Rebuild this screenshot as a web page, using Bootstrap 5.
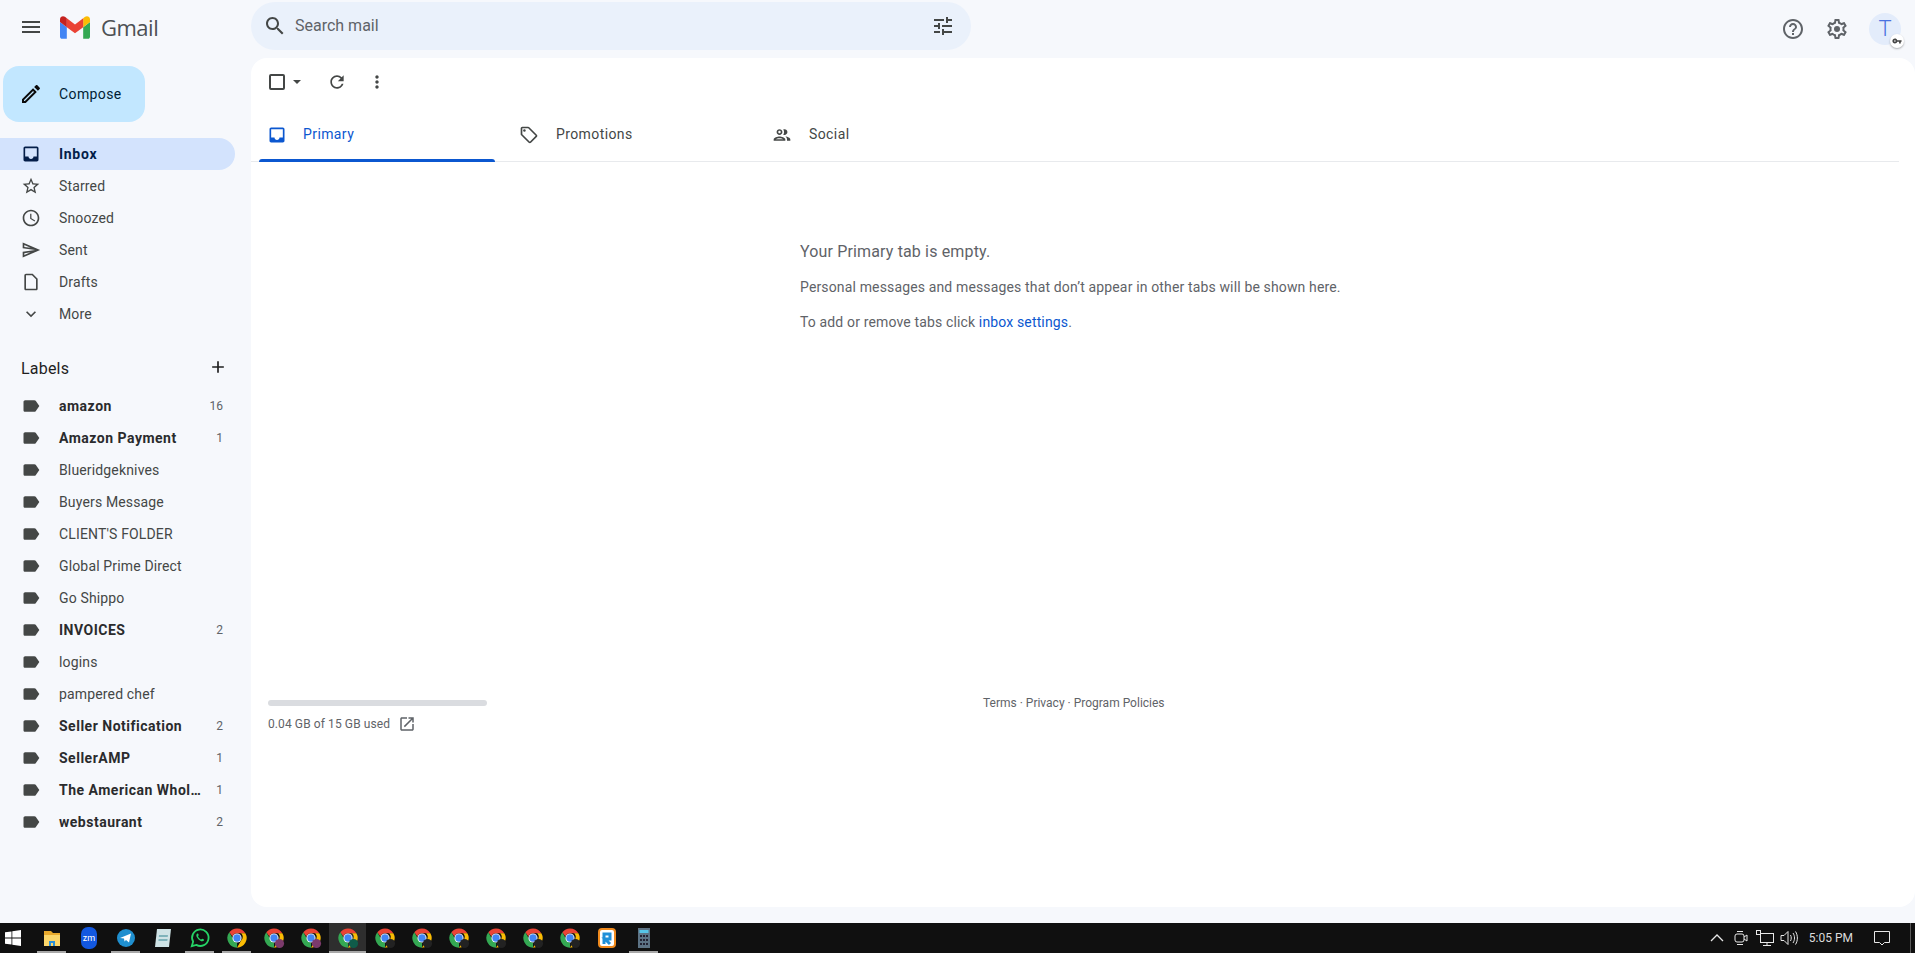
<!DOCTYPE html>
<html lang="en">
<head>
  <meta charset="UTF-8">
  <title>Inbox - Gmail</title>
  <meta name="viewport" content="width=device-width, initial-scale=1">
  <link href="https://cdn.jsdelivr.net/npm/bootstrap@5.3.0/dist/css/bootstrap.min.css" rel="stylesheet">
  <style>
    body { background: #f6f8fc; font-family: Roboto, "Liberation Sans", sans-serif; font-size: 14px; color: #444746; height: 953px; overflow: hidden; }
    svg { display: block; flex: none; fill: currentColor; }

    /* top bar */
    .gm-top { height: 58px; padding-top: 2px; }
    .gm-brand { width: 251px; padding: 0 0 6px 19px; color: #444746; }
    .gm-brand-logo { margin-left: 17px; }
    .gm-brand-name { font-family: "Open Sans", sans-serif; font-size: 22px; color: #4d5054; margin-left: 11px; letter-spacing: -.5px; }
    .gm-search { width: 720px; height: 48px; border-radius: 24px; background: #eaf1fb; padding: 0 16px 0 12px; }
    .gm-search-text { font-size: 16px; color: #5f6368; margin-left: 8px; }
    .gm-top-right { padding-right: 14px; color: #5f6368; gap: 20px; margin-top: -2px; }
    .gm-avatar { width: 32px; height: 32px; border-radius: 50%; background: #e3ecfb; color: #4a72e0; font-size: 22px; font-weight: 300; line-height: 32px; text-align: center; position: relative; }
    .gm-key { position: absolute; right: -3px; bottom: -3px; width: 14px; height: 14px; border-radius: 50%; background: #fff; color: #444; box-shadow: 0 1px 2px rgba(0,0,0,.3); padding: 2px; }

    /* sidebar */
    .gm-side { width: 251px; flex: none; }
    .gm-compose { width: 142px; height: 56px; margin: 8px 0 16px 3px; border-radius: 16px; background: #c2e7ff; color: #001d35; letter-spacing: .4px; padding-left: 16px; gap: 16px; }
    .gm-compose svg { color: #0b0b0b; }
    .gm-row { width: 235px; height: 32px; padding: 0 12px 0 21px; border-radius: 0 16px 16px 0; }
    .gm-row-text { margin-left: 18px; flex: 1 1 0; min-width: 0; white-space: nowrap; letter-spacing: .15px; }
    .gm-row-on { background: #d3e3fd; color: #041e49; font-weight: 700; }
    .gm-row-on .gm-row-text { letter-spacing: .7px; }
    .gm-row-bold .gm-row-text { letter-spacing: .5px; }
    .gm-row-bold { color: #2a2b2d; font-weight: 700; }
    .gm-row-bold svg { color: #444746; }
    .gm-count { font-size: 12px; color: #5f6368; font-weight: 400; margin-left: 8px; }
    .gm-labels-head { width: 235px; height: 60px; padding: 27px 7px 0 21px; font-size: 16px; color: #1f1f1f; letter-spacing: .2px; }

    /* main card */
    .gm-card { background: #fff; border-radius: 16px; height: 849px; }
    .gm-tools { height: 48px; padding-left: 17px; color: #444746; }
    .gm-check { width: 16px; height: 16px; border: 2px solid #444746; border-radius: 2px; margin-left: 1px; }
    .gm-caret { width: 0; height: 0; border-left: 4px solid transparent; border-right: 4px solid transparent; border-top: 4px solid #444746; margin: 0 26px 0 8px; }
    .gm-tools-dots { margin-left: 20px; }
    .gm-tabs { height: 56px; border-bottom: 1px solid #e8eaed; margin-right: 16px; }
    .gm-tab { width: 253px; padding: 2px 0 0 24px; gap: 17px; color: #444746; letter-spacing: .4px; position: relative; }
    .gm-tab:first-child { margin-left: 8px; width: 236px; padding-left: 8px; gap: 16px; color: #0b57d0; }
    .gm-tab-bar { position: absolute; left: 0; right: 0; bottom: -1px; height: 3px; background: #0b57d0; border-radius: 3px 3px 0 0; }
    .gm-empty { padding: 79px 0 0 549px; color: #5f6368; height: 538px; }
    .gm-empty-title { font-size: 16px; line-height: 22px; margin-bottom: 14px; letter-spacing: .15px; }
    .gm-empty-line { line-height: 20px; margin-bottom: 15px; letter-spacing: .145px; }
    .gm-link { color: #0b57d0; text-decoration: none; }
    .gm-foot { font-size: 12px; color: #5f6368; padding-left: 17px; }
    .gm-bar { width: 219px; height: 6px; border-radius: 3px; background: #dadce0; margin-bottom: 9px; }
    .gm-used { letter-spacing: .1px; }
    .gm-foot-links { margin-left: 496px; margin-top: -6px; }

    /* windows taskbar */
    .gm-task { height: 30px; background: #101010; color: #e8e8e8; margin-top: 16px; }
    .gm-win { width: 33px; padding-left: 5px; color: #fff; }
    .gm-slot { width: 37px; height: 30px; position: relative; }
    .gm-slot-on { background: #2e2e2e; }
    .gm-slot-run::after { content: ""; position: absolute; left: 4px; right: 4px; bottom: 0; height: 2px; background: #a8a8a8; }
    .gm-slot-on::after { left: 0; right: 0; }
    .gm-tray { font-size: 12px; height: 30px; }
    .gm-tray svg { fill: none; stroke: #e8e8e8; }
    .gm-tray-cam { margin-left: 10px; }
    .gm-tray-net { margin-left: 8px; }
    .gm-tray-vol { margin-left: 6px; }
    .gm-clock { margin: 0 21px 0 11px; color: #dcdcdc; }
    .gm-tray-sep { width: 1px; height: 30px; background: #5a5a5a; margin: 0 4px 0 20px; }
  </style>
</head>
<body>

  <svg width="0" height="0" class="position-absolute">
    <defs>
      <symbol id="chrome" viewBox="0 0 24 24">
        <path fill="#ea4335" d="M12 1.5a10.5 10.5 0 0 1 9.1 5.25H12a5.25 5.25 0 0 0-5 3.6L3.6 5.7A10.5 10.5 0 0 1 12 1.5z"/>
        <path fill="#fbbc04" d="M21.1 6.75A10.5 10.5 0 0 1 12 22.5l4.5-7.8a5.25 5.25 0 0 0 0-7.95z"/>
        <path fill="#34a853" d="M3.6 5.7l4.5 7.8a5.25 5.25 0 0 0 4 3.7L12 22.5A10.5 10.5 0 0 1 3.6 5.7z"/>
        <circle cx="12" cy="12" r="5" fill="#fff"/>
        <circle cx="12" cy="12" r="4" fill="#4285f4"/>
      </symbol>
      <symbol id="label" viewBox="0 0 24 24"><path d="M17.63 5.84C17.27 5.33 16.67 5 16 5L5 5.01C3.9 5.01 3 5.9 3 7v10c0 1.1.9 1.99 2 1.99L16 19c.67 0 1.27-.33 1.63-.84L22 12l-4.37-6.16z"/></symbol>
    </defs>
  </svg>

  <!-- Top bar -->
  <header class="gm-top d-flex">
    <div class="gm-brand d-flex align-items-center">
      <svg width="24" height="24" viewBox="0 0 24 24"><path d="M3 18h18v-2H3v2zm0-5h18v-2H3v2zm0-7v2h18V6H3z"/></svg>
      <svg class="gm-brand-logo" width="30" height="23" viewBox="52 42 88 66">
        <path fill="#4285f4" d="M58 108h14V74L52 59v43c0 3.32 2.69 6 6 6"/>
        <path fill="#34a853" d="M120 108h14c3.32 0 6-2.69 6-6V59l-20 15"/>
        <path fill="#fbbc04" d="M120 48v26l20-15v-8c0-7.42-8.47-11.65-14.4-7.2"/>
        <path fill="#ea4335" d="M72 74V48l24 18 24-18v26L96 92"/>
        <path fill="#c5221f" d="M52 51v8l20 15V48l-5.6-4.2c-5.94-4.45-14.4-.22-14.4 7.2"/>
      </svg>
      <span class="gm-brand-name">Gmail</span>
    </div>
    <div class="gm-search d-flex align-items-center">
      <svg width="24" height="24" viewBox="0 0 24 24"><path d="M15.5 14h-.79l-.28-.27C15.41 12.59 16 11.11 16 9.5 16 5.91 13.09 3 9.5 3S3 5.91 3 9.5 5.91 16 9.5 16c1.61 0 3.09-.59 4.23-1.57l.27.28v.79l5 4.99L20.49 19l-4.99-5zm-6 0C7.01 14 5 11.99 5 9.5S7.01 5 9.5 5 14 7.01 14 9.5 11.99 14 9.5 14z"/></svg>
      <span class="gm-search-text flex-grow-1">Search mail</span>
      <svg width="24" height="24" viewBox="0 0 24 24"><path d="M3 17v2h6v-2H3zM3 5v2h10V5H3zm10 16v-2h8v-2h-8v-2h-2v6h2zM7 9v2H3v2h4v2h2V9H7zm14 4v-2H11v2h10zm-6-4h2V7h4V5h-4V3h-2v6z"/></svg>
    </div>
    <div class="gm-top-right d-flex align-items-center ms-auto">
      <svg width="24" height="24" viewBox="0 0 24 24"><path d="M11 18h2v-2h-2v2zm1-16C6.48 2 2 6.48 2 12s4.48 10 10 10 10-4.48 10-10S17.52 2 12 2zm0 18c-4.41 0-8-3.59-8-8s3.59-8 8-8 8 3.59 8 8-3.59 8-8 8zm0-14c-2.21 0-4 1.79-4 4h2c0-1.1.9-2 2-2s2 .9 2 2c0 2-3 1.75-3 5h2c0-2.25 3-2.5 3-5 0-2.21-1.79-4-4-4z"/></svg>
      <svg width="24" height="24" viewBox="0 0 24 24"><path d="M19.43 12.98c.04-.32.07-.64.07-.98 0-.34-.03-.66-.07-.98l2.11-1.65c.19-.15.24-.42.12-.64l-2-3.46c-.09-.16-.26-.25-.44-.25-.06 0-.12.01-.17.03l-2.49 1c-.52-.4-1.08-.73-1.69-.98l-.38-2.65C14.46 2.18 14.25 2 14 2h-4c-.25 0-.46.18-.49.42l-.38 2.65c-.61.25-1.17.59-1.69.98l-2.49-1c-.06-.02-.12-.03-.18-.03-.17 0-.34.09-.43.25l-2 3.46c-.13.22-.07.49.12.64l2.11 1.65c-.04.32-.07.65-.07.98 0 .33.03.66.07.98l-2.11 1.65c-.19.15-.24.42-.12.64l2 3.46c.09.16.26.25.44.25.06 0 .12-.01.17-.03l2.49-1c.52.4 1.08.73 1.69.98l.38 2.65c.03.24.24.42.49.42h4c.25 0 .46-.18.49-.42l.38-2.65c.61-.25 1.17-.59 1.69-.98l2.49 1c.06.02.12.03.18.03.17 0 .34-.09.43-.25l2-3.46c.12-.22.07-.49-.12-.64l-2.11-1.65zm-1.98-1.71c.04.31.05.52.05.73 0 .21-.02.43-.05.73l-.14 1.13.89.7 1.08.84-.7 1.21-1.27-.51-1.04-.42-.9.68c-.43.32-.84.56-1.25.73l-1.06.43-.16 1.13-.2 1.35h-1.4l-.19-1.35-.16-1.13-1.06-.43c-.43-.18-.83-.41-1.23-.71l-.91-.7-1.06.43-1.27.51-.7-1.21 1.08-.84.89-.7-.14-1.13c-.03-.31-.05-.54-.05-.74s.02-.43.05-.73l.14-1.13-.89-.7-1.08-.84.7-1.21 1.27.51 1.04.42.9-.68c.43-.32.84-.56 1.25-.73l1.06-.43.16-1.13.2-1.35h1.39l.19 1.35.16 1.13 1.06.43c.43.18.83.41 1.23.71l.91.7 1.06-.43 1.27-.51.7 1.21-1.07.85-.89.7.14 1.13z"/><circle cx="12" cy="12" r="3"/></svg>
      <div class="gm-avatar">T
        <span class="gm-key"><svg width="10" height="10" viewBox="0 0 24 24"><path d="M12.65 10C11.83 7.67 9.61 6 7 6c-3.31 0-6 2.69-6 6s2.69 6 6 6c2.61 0 4.83-1.67 5.65-4H17v4h4v-4h2v-4H12.65zM7 14c-1.1 0-2-.9-2-2s.9-2 2-2 2 .9 2 2-.9 2-2 2z"/></svg></span>
      </div>
    </div>
  </header>

  <div class="d-flex">
    <!-- Sidebar -->
    <nav class="gm-side">
      <div class="gm-compose d-flex align-items-center">
        <svg width="24" height="24" viewBox="0 0 24 24"><path d="M3 17.25V21h3.75L17.81 9.94l-3.75-3.75L3 17.25zM5.92 19H5v-.92l9.06-9.06.92.92L5.92 19zM20.71 5.63l-2.34-2.34c-.2-.2-.45-.29-.71-.29s-.51.1-.7.29l-1.83 1.83 3.75 3.75 1.83-1.83c.39-.39.39-1.02 0-1.41z"/></svg>
        <span>Compose</span>
      </div>

      <div class="gm-row gm-row-on d-flex align-items-center">
        <svg width="20" height="20" viewBox="0 0 24 24"><path d="M19 3H4.99c-1.11 0-1.98.89-1.98 2L3 19c0 1.1.88 2 1.99 2H19c1.1 0 2-.9 2-2V5c0-1.11-.9-2-2-2zm0 12h-4c0 1.66-1.35 3-3 3s-3-1.34-3-3H4.99V5H19v10z"/></svg>
        <span class="gm-row-text">Inbox</span>
      </div>
      <div class="gm-row d-flex align-items-center">
        <svg width="20" height="20" viewBox="0 0 24 24"><path d="M22 9.24l-7.19-.62L12 2 9.19 8.63 2 9.24l5.46 4.73L5.82 21 12 17.27 18.18 21l-1.63-7.03L22 9.24zM12 15.4l-3.76 2.27 1-4.28-3.32-2.88 4.38-.38L12 6.1l1.71 4.04 4.38.38-3.32 2.88 1 4.28L12 15.4z"/></svg>
        <span class="gm-row-text">Starred</span>
      </div>
      <div class="gm-row d-flex align-items-center">
        <svg width="20" height="20" viewBox="0 0 24 24"><path d="M11.99 2C6.47 2 2 6.48 2 12s4.47 10 9.99 10C17.52 22 22 17.52 22 12S17.52 2 11.99 2zM12 20c-4.42 0-8-3.58-8-8s3.58-8 8-8 8 3.58 8 8-3.58 8-8 8zm.5-13H11v6l5.25 3.15.75-1.23-4.5-2.67z"/></svg>
        <span class="gm-row-text">Snoozed</span>
      </div>
      <div class="gm-row d-flex align-items-center">
        <svg width="20" height="20" viewBox="0 0 24 24"><path d="M4.01 6.03l7.51 3.22-7.52-1 .01-2.22m7.5 8.72L4 17.97v-2.22l7.51-1M2.01 3L2 10l15 2-15 2 .01 7L23 12 2.01 3z"/></svg>
        <span class="gm-row-text">Sent</span>
      </div>
      <div class="gm-row d-flex align-items-center">
        <svg width="20" height="20" viewBox="0 0 24 24"><path d="M6 2c-1.1 0-2 .9-2 2v16c0 1.1.9 2 2 2h12c1.1 0 2-.9 2-2V8l-6-6H6zm0 2h7.17L18 8.83V20H6V4z"/></svg>
        <span class="gm-row-text">Drafts</span>
      </div>
      <div class="gm-row d-flex align-items-center">
        <svg width="20" height="20" viewBox="0 0 24 24"><path d="M16.59 8.59L12 13.17 7.41 8.59 6 10l6 6 6-6z"/></svg>
        <span class="gm-row-text">More</span>
      </div>

      <div class="gm-labels-head d-flex justify-content-between">
        <span>Labels</span>
        <svg width="20" height="20" viewBox="0 0 24 24"><path d="M19 13h-6v6h-2v-6H5v-2h6V5h2v6h6v2z"/></svg>
      </div>

      <div id="label-list"></div>
    </nav>

    <!-- Main card -->
    <main class="gm-card flex-grow-1">
      <div class="gm-tools d-flex align-items-center">
        <span class="gm-check"></span>
        <span class="gm-caret"></span>
        <svg width="20" height="20" viewBox="0 0 24 24"><path d="M17.65 6.35C16.2 4.9 14.21 4 12 4c-4.42 0-7.99 3.58-7.99 8s3.57 8 7.99 8c3.73 0 6.84-2.55 7.73-6h-2.08c-.82 2.33-3.04 4-5.65 4-3.31 0-6-2.69-6-6s2.69-6 6-6c1.66 0 3.14.69 4.22 1.78L13 11h7V4l-2.35 2.35z"/></svg>
        <svg class="gm-tools-dots" width="20" height="20" viewBox="0 0 24 24"><path d="M12 8c1.1 0 2-.9 2-2s-.9-2-2-2-2 .9-2 2 .9 2 2 2zm0 2c-1.1 0-2 .9-2 2s.9 2 2 2 2-.9 2-2-.9-2-2-2zm0 6c-1.1 0-2 .9-2 2s.9 2 2 2 2-.9 2-2-.9-2-2-2z"/></svg>
      </div>

      <div class="gm-tabs d-flex">
        <div class="gm-tab d-flex align-items-center">
          <svg width="20" height="20" viewBox="0 0 24 24"><path d="M19 3H4.99c-1.11 0-1.98.89-1.98 2L3 19c0 1.1.88 2 1.99 2H19c1.1 0 2-.9 2-2V5c0-1.11-.9-2-2-2zm0 12h-4c0 1.66-1.35 3-3 3s-3-1.34-3-3H4.99V5H19v10z"/></svg>
          <span>Primary</span>
          <span class="gm-tab-bar"></span>
        </div>
        <div class="gm-tab d-flex align-items-center">
          <svg width="20" height="20" viewBox="0 0 24 24"><path d="M21.41 11.58l-9-9C12.05 2.22 11.55 2 11 2H4c-1.1 0-2 .9-2 2v7c0 .55.22 1.05.59 1.42l9 9c.36.36.86.58 1.41.58s1.05-.22 1.41-.59l7-7c.37-.36.59-.86.59-1.41s-.23-1.06-.59-1.42zM13 20.01L4 11V4h7v-.01l9 9-7 7.02z"/><circle cx="6.5" cy="6.5" r="1.5"/></svg>
          <span>Promotions</span>
        </div>
        <div class="gm-tab d-flex align-items-center">
          <svg width="20" height="20" viewBox="0 0 24 24"><path d="M9 13.75c-2.34 0-7 1.17-7 3.5V19h14v-1.75c0-2.33-4.66-3.5-7-3.5zM4.34 17c.84-.58 2.87-1.25 4.66-1.25s3.82.67 4.66 1.25H4.34zM9 12c1.93 0 3.5-1.57 3.5-3.5S10.93 5 9 5 5.5 6.57 5.5 8.5 7.07 12 9 12zm0-5c.83 0 1.5.67 1.5 1.5S9.83 10 9 10s-1.5-.67-1.5-1.5S8.17 7 9 7zm7.04 6.81c1.16.84 1.96 1.96 1.96 3.44V19h4v-1.75c0-2.02-3.5-3.17-5.96-3.44zM15 12c1.93 0 3.5-1.57 3.5-3.5S16.93 5 15 5c-.54 0-1.04.13-1.5.35.63.89 1 1.98 1 3.15s-.37 2.26-1 3.15c.46.22.96.35 1.5.35z"/></svg>
          <span>Social</span>
        </div>
      </div>

      <div class="gm-empty">
        <div class="gm-empty-title">Your Primary tab is empty.</div>
        <div class="gm-empty-line">Personal messages and messages that don’t appear in other tabs will be shown here.</div>
        <div class="gm-empty-line">To add or remove tabs click <a class="gm-link" href="#">inbox settings</a>.</div>
      </div>

      <div class="gm-foot d-flex">
        <div>
          <div class="gm-bar"></div>
          <div class="d-flex align-items-center">
            <span class="gm-used">0.04 GB of 15 GB used</span>
            <svg class="ms-2" width="18" height="18" viewBox="0 0 24 24"><path d="M19 19H5V5h7V3H5c-1.11 0-2 .9-2 2v14c0 1.1.89 2 2 2h14c1.1 0 2-.9 2-2v-7h-2v7zM14 3v2h3.59l-9.83 9.83 1.41 1.41L19 6.41V10h2V3h-7z"/></svg>
          </div>
        </div>
        <div class="gm-foot-links">Terms · Privacy · Program Policies</div>
      </div>
    </main>
  </div>

  <!-- Windows taskbar -->
  <footer class="gm-task d-flex align-items-center">
    <div class="gm-win">
      <svg width="16" height="16" viewBox="0 0 16 16"><path d="M0 2.3l6.5-.9v6.2H0zM7.3 1.3L16 0v7.6H7.3zM0 8.4h6.5v6.2L0 13.7zM7.3 8.4H16V16l-8.7-1.2z"/></svg>
    </div>
    <div id="task-slots" class="d-flex"></div>
    <div class="gm-tray d-flex align-items-center ms-auto">
      <svg width="14" height="14" viewBox="0 0 14 14" stroke-width="1.3"><path d="M1 10l6-6 6 6"/></svg>
      <svg class="gm-tray-cam" width="14" height="18" viewBox="0 0 14 18"><rect x="1" y="5" width="9" height="8" rx="2"/><path d="M10 8l3-2v6l-3-2M3 2.5h6M3 15.5h6"/></svg>
      <svg class="gm-tray-net" width="18" height="16" viewBox="0 0 18 16"><rect x="4.500" y="3.500" width="13" height="9"/><path d="M11 13v2M7 15.500h8"/><rect x=".5" y=".5" width="4" height="4"/></svg>
      <svg class="gm-tray-vol" width="18" height="16" viewBox="0 0 18 16"><path d="M1 5.500h3l4-4v13l-4-4H1zM10.500 5c1 2 1 4 0 6M13 3c2 3 2 7 0 10M15.500 1.500c2.500 4 2.500 9 0 13"/></svg>
      <span class="gm-clock">5:05 PM</span>
      <svg width="16" height="16" viewBox="0 0 16 16"><path d="M.5 1.500h15v11h-5L8 15l-2.500-2.500h-5z"/></svg>
      <span class="gm-tray-sep"></span>
    </div>
  </footer>

  <script>
    const LABELS = [
      ["amazon", 16], ["Amazon Payment", 1], ["Blueridgeknives"], ["Buyers Message"],
      ["CLIENT'S FOLDER"], ["Global Prime Direct"], ["Go Shippo"], ["INVOICES", 2],
      ["logins"], ["pampered chef"], ["Seller Notification", 2], ["SellerAMP", 1],
      ["The American Whol…", 1], ["webstaurant", 2]
    ];
    document.getElementById("label-list").innerHTML = LABELS.map(([name, count]) => `
      <div class="gm-row d-flex align-items-center ${count ? "gm-row-bold" : ""}">
        <svg width="20" height="20" viewBox="0 0 24 24"><use href="#label"/></svg>
        <span class="gm-row-text">${name}</span>
        ${count ? `<span class="gm-count">${count}</span>` : ""}
      </div>`).join("");

    const chrome = (badge) => `<svg width="22" height="22" viewBox="0 0 24 24"><use href="#chrome"/>${badge ? `<circle cx="18" cy="18" r="5" fill="${badge}"/>` : ""}</svg>`;
    const SLOTS = [
      { run: 1, icon: `<svg width="20" height="20" viewBox="0 0 20 20"><path fill="#e8a92c" d="M2 3h7l2 2h7v3H2z"/><path fill="#fbd66a" d="M2 7h16v11H2z"/><path fill="#2a8fd8" d="M7 18v-5h6v5h-2v-3H9v3z"/></svg>` },
      { icon: `<svg width="20" height="24" viewBox="0 0 20 24"><rect x="2" y="1" width="16" height="22" rx="7" fill="#1358e0"/><text x="10" y="15" font-size="9" fill="#fff" text-anchor="middle" font-family="Roboto">zm</text></svg>` },
      { run: 1, icon: `<svg width="20" height="20" viewBox="0 0 20 20"><circle cx="10" cy="10" r="9" fill="#1f8fcf"/><path fill="#fff" d="M4 10l11-4.500-2 9-3-2.500-1.500 1.500-.5-3z"/></svg>` },
      { icon: `<svg width="20" height="22" viewBox="0 0 20 22"><path fill="#cfe3e6" d="M4 2h14l-2 18H2z"/><path fill="#7fb3bb" d="M6 8h9l-.3 2H5.800zM5.600 12h9l-.3 2H5.400z"/></svg>` },
      { run: 1, icon: `<svg width="22" height="22" viewBox="0 0 24 24"><path fill="none" stroke="#25d366" stroke-width="2" d="M3 21l1.500-5A9 9 0 1 1 8 19.500z"/><path fill="#25d366" d="M8.500 7.500c1-1 1.500-.5 2 1 .3.800-.8 1.200-.5 2 .6 1.300 1.700 2.300 3 3 .7.300 1.200-.8 2-.5 1.500.5 2 1 1 2-2.500 2.500-10-4.500-7.500-7.500z"/></svg>` },
      { run: 1, icon: chrome() },
      { icon: chrome("#7b3a6b") },
      { icon: chrome("#7b3a6b") },
      { run: 1, on: 1, icon: chrome("#0f5c4a") },
      { icon: chrome("#222") }, { icon: chrome("#222") }, { icon: chrome("#222") },
      { icon: chrome("#222") }, { icon: chrome("#222") }, { icon: chrome("#222") },
      { icon: `<svg width="20" height="22" viewBox="0 0 20 22"><rect x="2" y="2" width="16" height="18" rx="3" fill="#fff" stroke="#f08a1d" stroke-width="2"/><path fill="none" stroke="#1f8fd8" stroke-width="3" d="M7 17V7h6v5H8l5 5"/></svg>` },
      { run: 1, icon: `<svg width="18" height="22" viewBox="0 0 18 22"><rect x="3" y="1" width="12" height="20" fill="#5c7284"/><rect x="4.500" y="3" width="9" height="3" fill="#56c4e8"/><path fill="#223" d="M5 8h2v2H5zM8 8h2v2H8zM11 8h2v2h-2zM5 12h2v2H5zM8 12h2v2H8zM11 12h2v2h-2zM5 16h2v2H5zM8 16h2v2H8zM11 16h2v2h-2z"/></svg>` }
    ];
    document.getElementById("task-slots").innerHTML = SLOTS.map(s =>
      `<div class="gm-slot d-flex align-items-center justify-content-center ${s.run ? "gm-slot-run" : ""} ${s.on ? "gm-slot-on" : ""}">${s.icon}</div>`
    ).join("");
  </script>
  <script src="https://cdn.jsdelivr.net/npm/bootstrap@5.3.0/dist/js/bootstrap.bundle.min.js"></script>
</body>
</html>
